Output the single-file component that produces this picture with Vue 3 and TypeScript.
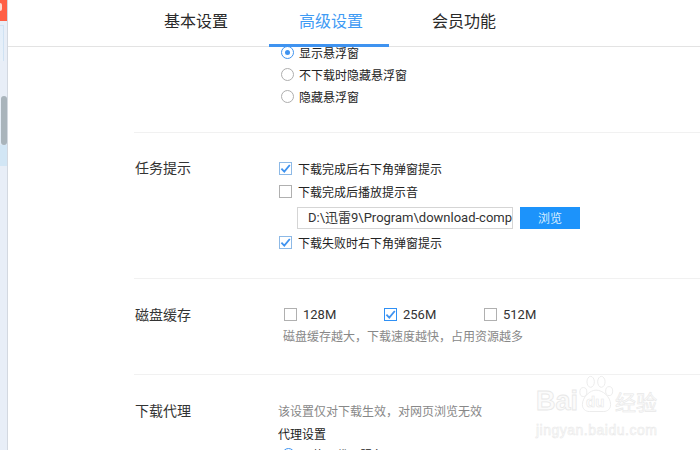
<script setup lang="ts">
const tabs = [
  { label: '基本设置', active: false },
  { label: '高级设置', active: true },
  { label: '会员功能', active: false },
]
const radios = [
  { label: '显示悬浮窗', on: true },
  { label: '不下载时隐藏悬浮窗', on: false },
  { label: '隐藏悬浮窗', on: false },
]
const sizes = [
  { label: '128M', on: false },
  { label: '256M', on: true },
  { label: '512M', on: false },
]
</script>

<template>
  <div class="page">
    <aside class="side">
      <div class="side-red"><span class="red-glyph"></span></div>
      <div class="side-panel"></div>
      <div class="side-track">
        <div class="thumb"></div>
      </div>
    </aside>
    <main class="main">
      <header class="tabs">
        <div v-for="t in tabs" :key="t.label" class="tab" :class="{ active: t.active }">{{ t.label }}</div>
      </header>
      <div class="body">
        <section class="radios">
          <div v-for="r in radios" :key="r.label" class="radio-row">
            <span class="radio" :class="{ on: r.on }"></span>
            <span>{{ r.label }}</span>
          </div>
        </section>

        <section class="sec task">
          <div class="sec-label">任务提示</div>
          <div class="sec-content task-list">
            <div class="check-row">
              <span class="check on"><svg viewBox="0 0 13 13"><path d="M2.4 6.6 5.3 9.6 10.8 3" /></svg></span>
              <span>下载完成后右下角弹窗提示</span>
            </div>
            <div class="check-row">
              <span class="check"></span>
              <span>下载完成后播放提示音</span>
            </div>
            <div class="path-row">
              <div class="path-input">D:\迅雷9\Program\download-comp</div>
              <div class="btn">浏览</div>
            </div>
            <div class="check-row">
              <span class="check on"><svg viewBox="0 0 13 13"><path d="M2.4 6.6 5.3 9.6 10.8 3" /></svg></span>
              <span>下载失败时右下角弹窗提示</span>
            </div>
          </div>
        </section>

        <section class="sec disk">
          <div class="sec-label">磁盘缓存</div>
          <div class="sec-content disk-content">
            <div class="sizes">
              <div v-for="s in sizes" :key="s.label" class="size">
                <span class="check" :class="{ strong: s.on }">
                  <svg v-if="s.on" viewBox="0 0 13 13"><path d="M2.4 6.6 5.3 9.6 10.8 3" /></svg>
                </span>
                <span>{{ s.label }}</span>
              </div>
            </div>
            <div class="hint">磁盘缓存越大，下载速度越快，占用资源越多</div>
          </div>
        </section>

        <section class="sec proxy">
          <div class="sec-label">下载代理</div>
          <div class="sec-content proxy-content">
            <div class="hint">该设置仅对下载生效，对网页浏览无效</div>
            <div class="proxy-title">代理设置</div>
            <div class="radio-row proxy-radio">
              <span class="radio on"></span>
              <span>不使用代理服务器</span>
            </div>
          </div>
        </section>
      </div>
    </main>

    <div class="mark">
      <div class="mark-top">
        <span class="mark-bai">Bai</span>
        <div class="paw-wrap">
          <svg class="paw" viewBox="0 0 38 38">
            <ellipse cx="5.5" cy="17" rx="3.6" ry="4.6" />
            <ellipse cx="13" cy="6.5" rx="3.8" ry="5.6" />
            <ellipse cx="24" cy="6.5" rx="3.8" ry="5.6" />
            <ellipse cx="32" cy="16" rx="3.6" ry="4.6" />
            <path d="M18.5 15c-6 0-14 7-14 15 0 4.500 3.500 7 7 7h15c3.500 0 7-2.500 7-7 0-8-8-15-15-15z" />
          </svg>
          <span class="mark-du">du</span>
        </div>
        <span class="mark-jy">经验</span>
      </div>
      <div class="mark-url">jingyan.baidu.com</div>
    </div>
  </div>
</template>

<style>
html, body { margin: 0; background: #fff; overflow: hidden; }
</style>

<style scoped>
.page {
  position: relative;
  display: flex;
  width: 700px;
  height: 450px;
  overflow: hidden;
  background: #fff;
  color: #222;
  font-family: "Noto Sans CJK SC", "Noto Sans", sans-serif;
  font-size: 12px;
}
.side {
  position: relative;
  width: 7px;
  flex: none;
  display: flex;
  flex-direction: column;
  background: #e8eef7;
  border-right: 1px solid #d3d8e0;
}
.side-red { height: 21px; background: #ff5f45; flex: none; position: relative; }
.red-glyph {
  position: absolute; left: 0; top: 3px;
  width: 2px; height: 8px;
  background: #ffd9d0;
  border-radius: 0 2px 2px 0;
}
.side-panel {
  flex: none;
  height: 35px;
  width: 3px;
  margin-top: 4px;
  background: linear-gradient(#e2eefa, #e9f0f8);
  border-right: 1px solid #cfe2f3;
  border-top: 1px solid #cfe2f3;
}
.side-track {
  flex: none;
  height: 70px;
  margin-top: 35px;
  background: linear-gradient(#e8eef7 0, #dfeaf5 70%, #d2e6f5 70%, #d2e6f5 100%);
}
.thumb { width: 6px; margin-left: 1px; height: 49px; border-radius: 3px; background: #a9b4bb; }
.main { flex: 1; min-width: 0; display: flex; flex-direction: column; }
.tabs {
  position: relative;
  z-index: 1;
  height: 46px;
  box-sizing: content-box;
  display: flex;
  padding-left: 126px;
  border-bottom: 1px solid #e3e3e3;
  flex: none;
  background: #fff;
}
.tab {
  width: 124px;
  text-align: center;
  line-height: 40px;
  font-size: 16px;
  color: #2a2a2a;
  position: relative;
  height: 47px;
}
.tab:nth-child(2) { width: 120px; box-sizing: border-box; padding-left: 4px; margin-left: 11px; margin-right: 13px; }
.tab.active { color: #3f9bf4; }
.tab.active::after {
  content: "";
  position: absolute;
  left: 0; right: 0; bottom: 0;
  height: 3px;
  background: #3f93f0;
}
.body { padding-left: 126px; }
.radios { padding: 0 0 6px 147px; margin-top: -6px; height: 85px; box-sizing: content-box; border-bottom: 1px solid #f1f1f1; }
.radio-row { display: flex; align-items: center; gap: 5px; height: 22px; color: #222; }
.radio {
  width: 11px; height: 11px;
  border: 1px solid #aeaeae;
  border-radius: 50%;
  position: relative;
  flex: none;
  background: #fff;
}
.radio.on { border-color: #3f93f0; }
.radio.on::after {
  content: ""; position: absolute; left: 3px; top: 3px;
  width: 5px; height: 5px; border-radius: 50%; background: #3f93f0;
}
.sec { display: flex; border-bottom: 1px solid #f1f1f1; }
.sec-label { width: 145px; flex: none; padding-left: 1px; box-sizing: border-box; font-size: 14px; line-height: 18px; color: #333; }
.task { height: 145px; }
.task .sec-label { padding-top: 25px; }
.task-list { padding-top: 24px; }
.check-row { display: flex; align-items: center; gap: 6px; height: 23px; }
.check {
  width: 11px; height: 11px;
  border: 1px solid #b0b0b0;
  display: inline-flex;
  flex: none;
  background: #fff;
}
.check svg { width: 13px; height: 13px; margin: -1px; flex: none; fill: none; stroke: #3f93f0; stroke-width: 1.8; }
.check.on { border-color: #8db9e6; }
.check.strong { border-color: #2f90f5; }
.path-row { display: flex; align-items: center; gap: 7px; margin: 4px 0 2px 18px; height: 22px; }
.path-input {
  width: 204px;
  height: 20px;
  line-height: 20px;
  padding-left: 10px;
  border: 1px solid #d5d5d5;
  box-sizing: content-box;
  white-space: nowrap;
  font-family: Roboto, "Noto Sans CJK SC", sans-serif;
  font-size: 13px;
  color: #333;
}
.btn {
  width: 60px; height: 22px;
  background: #1c93fb;
  color: #d9eeff;
  text-align: center;
  line-height: 22px;
  font-size: 12px;
}
.disk { height: 95px; }
.disk .sec-label { padding-top: 26px; }
.disk-content { padding-top: 24px; }
.sizes { display: flex; padding-left: 5px; }
.size { width: 100px; display: flex; align-items: center; gap: 6px; height: 22px; font-family: Roboto, sans-serif; font-size: 13px; color: #333; }
.hint { color: #888; font-size: 12px; line-height: 18px; }
.disk .hint { padding-left: 4px; margin-top: 2px; }
.proxy { border-bottom: 0; }
.proxy .sec-label { padding-top: 26px; }
.proxy-content { padding-top: 27px; margin-left: -1px; }
.proxy-title { margin-top: 5px; line-height: 18px; color: #222; }
.proxy-radio { padding-left: 4px; }

.mark {
  position: absolute;
  left: 536px;
  top: 375px;
  pointer-events: none;
}
.mark-top { display: flex; align-items: flex-end; height: 38px; }
.mark-bai {
  width: 42px;
  font-family: "Liberation Sans", sans-serif;
  font-size: 27px;
  line-height: 24px;
  color: #fbfbfb;
  -webkit-text-stroke: 0.8px #e8e8e8;
  font-weight: 700;
}
.paw-wrap { position: relative; width: 37px; height: 38px; flex: none; }
.paw { display: block; width: 37px; height: 38px; fill: #fff; stroke: #ebebeb; stroke-width: 1; }
.mark-du {
  position: absolute; left: 8px; top: 19px;
  font-family: "Liberation Sans", sans-serif;
  font-size: 15px; line-height: 16px; font-weight: 700;
  color: #fff; -webkit-text-stroke: 0.6px #e8e8e8;
}
.mark-jy { font-size: 21px; line-height: 24px; color: #fbfbfb; -webkit-text-stroke: 0.6px #e8e8e8; white-space: nowrap; }
.mark-url {
  font-family: "Liberation Sans", sans-serif;
  font-size: 14px;
  color: #fcfcfc;
  -webkit-text-stroke: 0.5px #e8e8e8;
  line-height: 18px;
  margin-top: 8px;
  letter-spacing: 0.5px;
  white-space: nowrap;
}
</style>
